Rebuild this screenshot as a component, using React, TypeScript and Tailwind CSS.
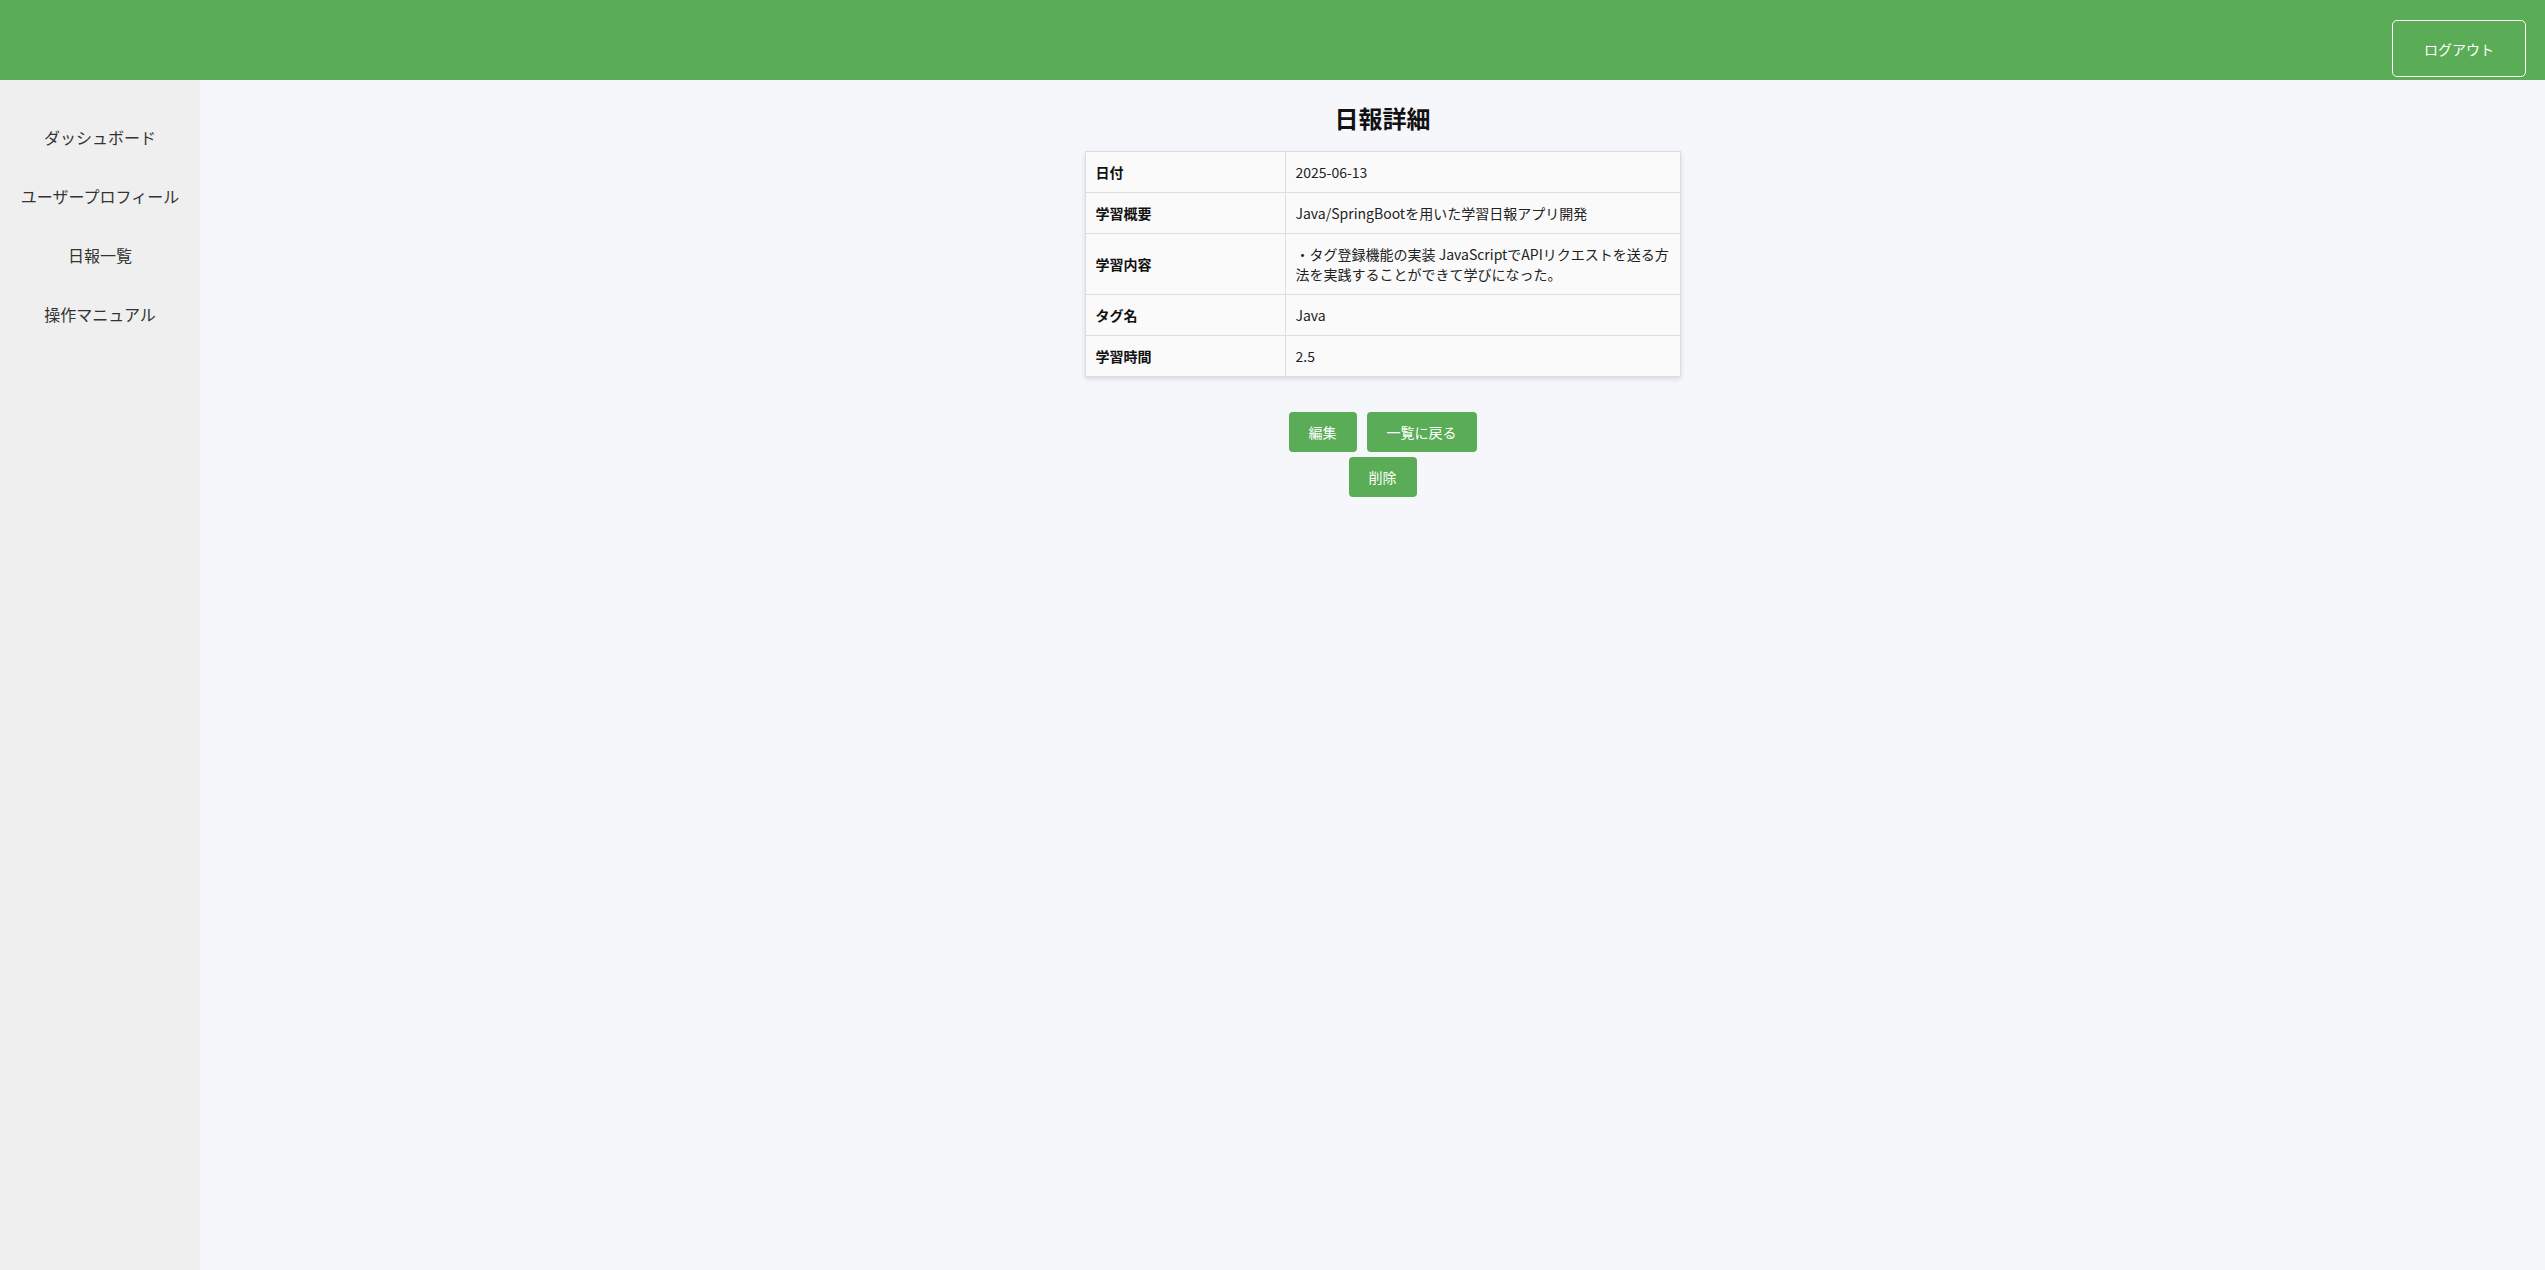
const rows: { label: string; value: string }[] = [
  { label: "日付", value: "2025-06-13" },
  { label: "学習概要", value: "Java/SpringBootを用いた学習日報アプリ開発" },
  { label: "学習内容", value: "・タグ登録機能の実装 JavaScriptでAPIリクエストを送る方法を実践することができて学びになった。" },
  { label: "タグ名", value: "Java" },
  { label: "学習時間", value: "2.5" },
];

const navItems = ["ダッシュボード", "ユーザープロフィール", "日報一覧", "操作マニュアル"];

export default function App() {
  return (
    <div className="min-h-[1270px] flex flex-col bg-[#f5f7fa] font-['Noto_Sans_CJK_JP','Noto_Sans',sans-serif] text-[#222]">
      <header className="h-20 shrink-0 bg-[#5aad56] flex justify-end items-start pt-5 pr-[19px]">
        <button
          type="button"
          className="w-[134px] h-[57px] rounded-[5px] border border-white text-white text-sm leading-5"
        >
          ログアウト
        </button>
      </header>

      <div className="flex flex-1">
        <aside className="w-[200px] shrink-0 bg-[#efefef] pt-[27px]">
          {navItems.map((item) => (
            <div key={item} className="h-[59px] flex items-center justify-center text-base text-[#333]">
              {item}
            </div>
          ))}
        </aside>

        <main className="flex-1 pl-5 pt-5 flex flex-col items-center">
          <h2 className="text-2xl leading-9 font-bold text-[#111] mb-[15px]">日報詳細</h2>

          <table className="w-[596px] border-collapse bg-[#fafafa] shadow-[0_2px_5px_rgba(0,0,0,0.12)] text-sm leading-5">
            <tbody>
              {rows.map((row) => (
                <tr key={row.label}>
                  <th className="w-[200px] border border-[#dddddd] px-[10px] py-[10px] text-left font-bold text-[#111] align-middle">
                    {row.label}
                  </th>
                  <td className="border border-[#dddddd] px-[10px] py-[10px] text-[#222]">{row.value}</td>
                </tr>
              ))}
            </tbody>
          </table>

          <div className="mt-[35px] flex flex-col items-center gap-[5px]">
            <div className="flex gap-[10px]">
              <button type="button" className="h-10 px-5 rounded bg-[#5aad56] text-white text-sm">
                編集
              </button>
              <button type="button" className="h-10 px-5 rounded bg-[#5aad56] text-white text-sm">
                一覧に戻る
              </button>
            </div>
            <button type="button" className="h-10 px-5 rounded bg-[#5aad56] text-white text-sm">
              削除
            </button>
          </div>
        </main>
      </div>
    </div>
  );
}
